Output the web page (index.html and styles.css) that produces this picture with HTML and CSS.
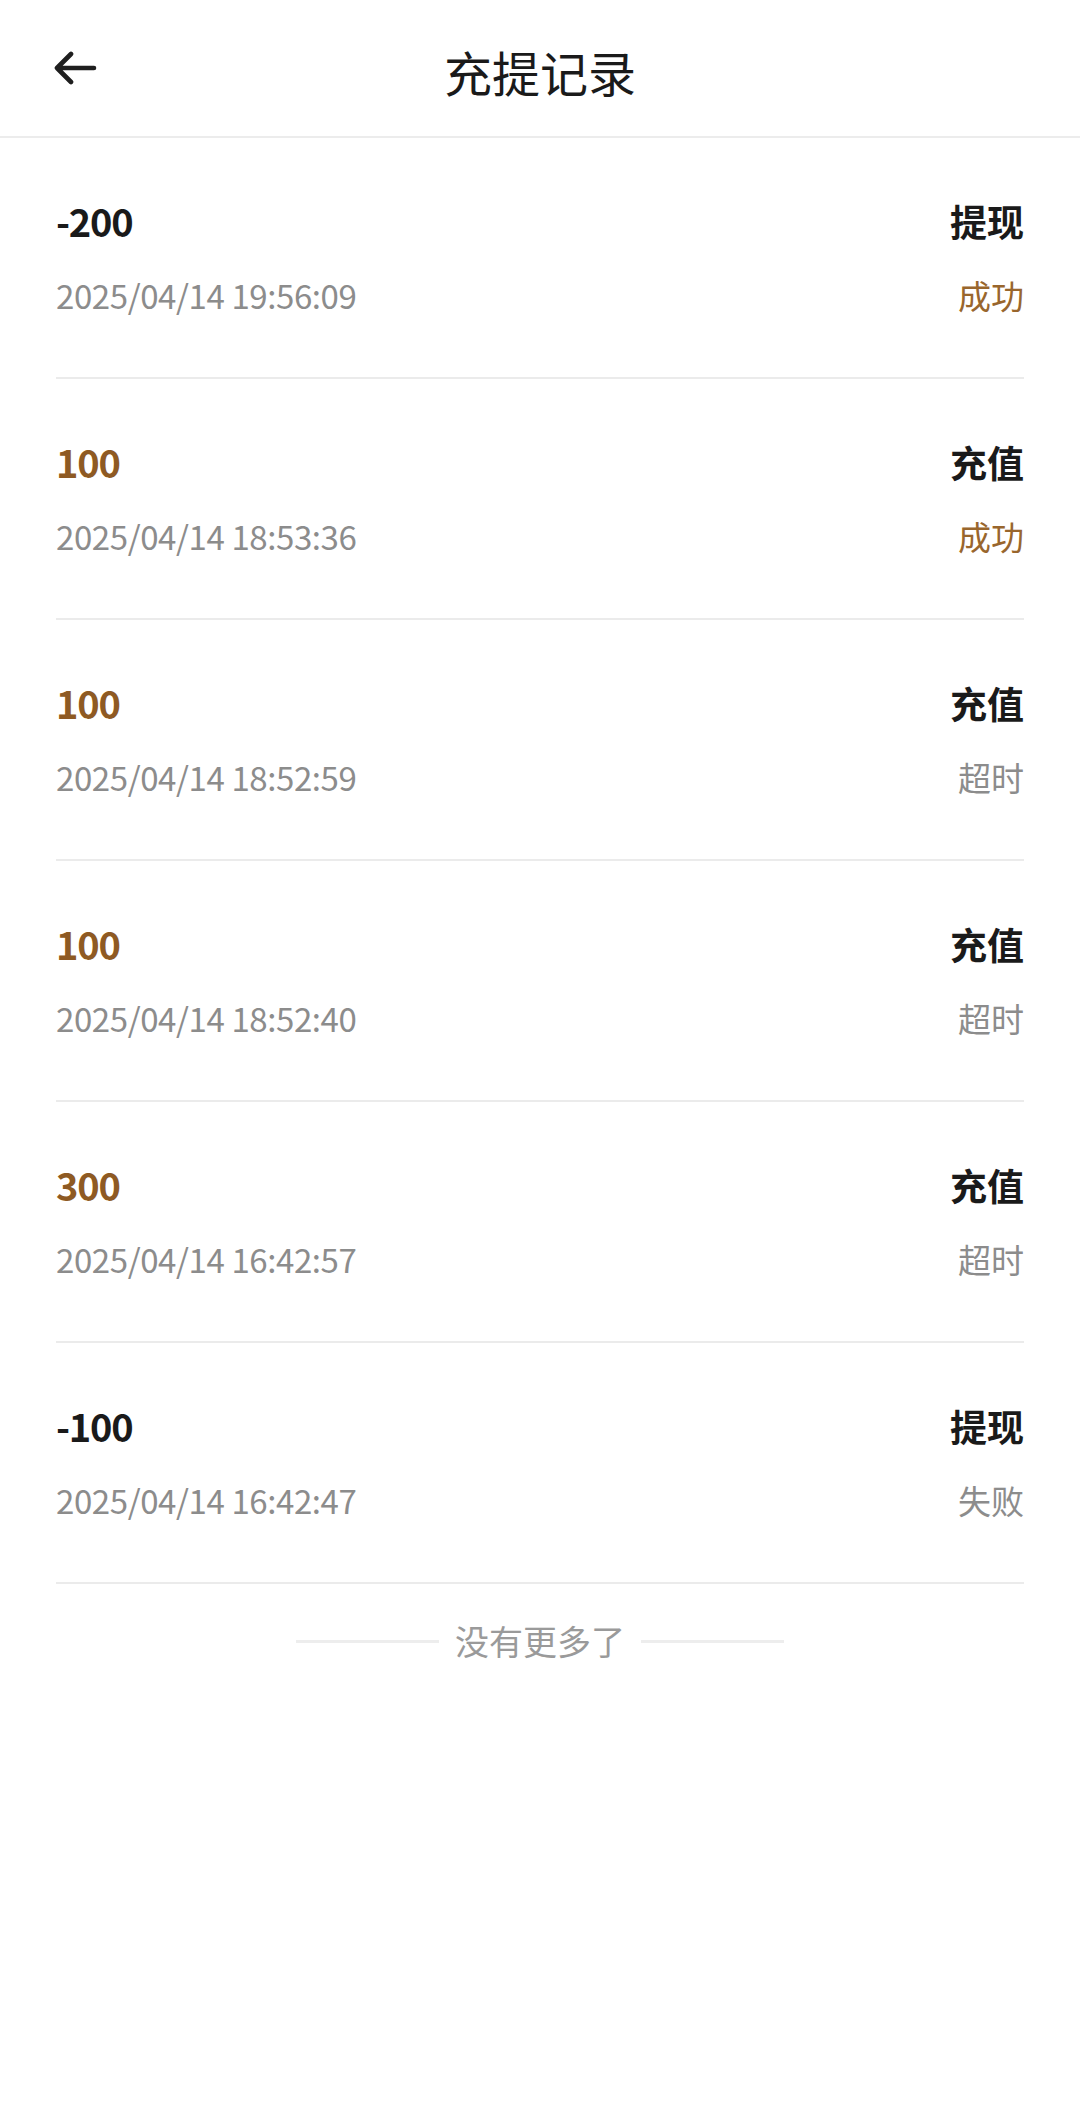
FILE: index.html
```html
<!DOCTYPE html>
<html lang="zh-CN">
<head>
<meta charset="utf-8">
<title>充提记录</title>
<link rel="stylesheet" href="styles.css">
</head>
<body>
<header class="topbar">
  <div class="topbar-left">
    <svg class="back" width="44" height="36" viewBox="0 0 44 36" aria-hidden="true">
      <path d="M3 17 H40 M3 17 L17 3 M3 17 L17 31" fill="none" stroke="#1f1f1f" stroke-width="4.6" stroke-linecap="round" stroke-linejoin="round"/>
    </svg>
  </div>
  <h1 class="title">充提记录</h1>
  <div class="topbar-right"></div>
</header>
<main class="list">
  <div class="rec">
    <div class="amount">-200</div>
    <div class="type">提现</div>
    <div class="time">2025/04/14 19:56:09</div>
    <div class="status ok">成功</div>
  </div>
  <div class="rec">
    <div class="amount plus">100</div>
    <div class="type">充值</div>
    <div class="time">2025/04/14 18:53:36</div>
    <div class="status ok">成功</div>
  </div>
  <div class="rec">
    <div class="amount plus">100</div>
    <div class="type">充值</div>
    <div class="time">2025/04/14 18:52:59</div>
    <div class="status">超时</div>
  </div>
  <div class="rec">
    <div class="amount plus">100</div>
    <div class="type">充值</div>
    <div class="time">2025/04/14 18:52:40</div>
    <div class="status">超时</div>
  </div>
  <div class="rec">
    <div class="amount plus">300</div>
    <div class="type">充值</div>
    <div class="time">2025/04/14 16:42:57</div>
    <div class="status">超时</div>
  </div>
  <div class="rec">
    <div class="amount">-100</div>
    <div class="type">提现</div>
    <div class="time">2025/04/14 16:42:47</div>
    <div class="status">失败</div>
  </div>
</main>
<div class="nomore">
  <span class="nomore-line"></span>
  <span class="nomore-text">没有更多了</span>
  <span class="nomore-line"></span>
</div>
</body>
</html>
```
FILE: styles.css
```css
html, body {
  margin: 0;
  padding: 0;
  background: #ffffff;
}
body {
  font-family: "Noto Sans CJK SC", "Noto Sans", sans-serif;
  color: #1a1a1a;
  width: 1080px;
  min-height: 2106px;
}
.topbar {
  height: 136px;
  display: grid;
  grid-template-columns: 1fr auto 1fr;
  align-items: center;
  border-bottom: 2px solid #ececec;
}
.topbar-left {
  padding-left: 54px;
  display: flex;
  align-items: center;
}
.back {
  display: block;
  margin-top: 2px;
}
.title {
  margin: 0;
  font-size: 48px;
  font-weight: 400;
  line-height: 64px;
  color: #1a1a1a;
  padding-top: 6px;
}
.list {
  margin: 0 56px;
}
.rec {
  display: grid;
  grid-template-columns: 1fr auto;
  row-gap: 22px;
  padding: 55px 0 58px;
  border-bottom: 2px solid #ebebeb;
}
.amount {
  font-size: 38px;
  font-weight: 700;
  line-height: 56px;
  letter-spacing: -1.2px;
  color: #1a1a1a;
}
.amount.plus {
  color: #8e5a23;
}
.type {
  font-size: 37px;
  font-weight: 700;
  line-height: 56px;
  text-align: right;
  color: #1a1a1a;
}
.time {
  font-size: 33px;
  line-height: 48px;
  letter-spacing: -0.4px;
  color: #8c8c8c;
}
.status {
  font-size: 33px;
  line-height: 48px;
  text-align: right;
  color: #8c8c8c;
}
.status.ok {
  color: #99662d;
}
.nomore {
  display: flex;
  justify-content: center;
  align-items: center;
  gap: 16px;
  margin-top: 33px;
}
.nomore-line {
  width: 143px;
  height: 3px;
  background: #ededed;
}
.nomore-text {
  font-size: 34px;
  line-height: 48px;
  color: #9a9a9a;
}
```
